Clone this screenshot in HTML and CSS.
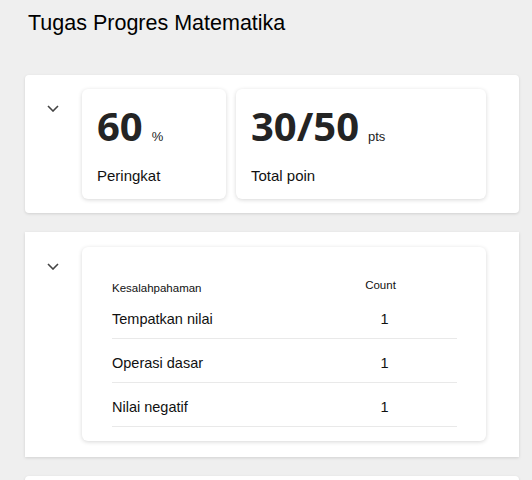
FILE: index.html
```html
<!DOCTYPE html>
<html lang="id">
<head>
<meta charset="utf-8">
<title>Tugas Progres Matematika</title>
<link rel="stylesheet" href="styles.css">
</head>
<body>
<h1 class="title">Tugas Progres Matematika</h1>

<section class="card card-top">
  <div class="toggle">
    <svg class="chev" width="12" height="7" viewBox="0 0 12 7"><polyline points="1,1 6,6 11,1" fill="none" stroke="#444" stroke-width="1.6"/></svg>
  </div>
  <div class="stats">
    <div class="stat stat-grade">
      <div class="big">60<span class="unit">%</span></div>
      <div class="label">Peringkat</div>
    </div>
    <div class="stat stat-points">
      <div class="big">30/50<span class="unit">pts</span></div>
      <div class="label">Total poin</div>
    </div>
  </div>
</section>

<section class="card card-mid">
  <div class="toggle">
    <svg class="chev" width="12" height="7" viewBox="0 0 12 7"><polyline points="1,1 6,6 11,1" fill="none" stroke="#444" stroke-width="1.6"/></svg>
  </div>
  <div class="table-card">
    <div class="thead">
      <div class="th th-name">Kesalahpahaman</div>
      <div class="th th-count">Count</div>
    </div>
    <div class="tr"><div class="td">Tempatkan nilai</div><div class="td td-count">1</div></div>
    <div class="tr"><div class="td">Operasi dasar</div><div class="td td-count">1</div></div>
    <div class="tr"><div class="td">Nilai negatif</div><div class="td td-count">1</div></div>
  </div>
</section>

<section class="card card-bottom"></section>
</body>
</html>
```

FILE: styles.css
```css
html, body {
  margin: 0;
  padding: 0;
}
body {
  background: #efefef;
  font-family: "Liberation Sans", Arial, sans-serif;
  color: #111;
  overflow: hidden;
  height: 480px;
}
.title {
  margin: 11px 0 0 0;
  padding-left: 28px;
  font-size: 21.5px;
  font-weight: normal;
  line-height: 25px;
  color: #000;
}
.card {
  background: #fff;
  margin: 0 13px 0 25px;
  display: flex;
  box-shadow: 0 1px 3px rgba(0, 0, 0, 0.13);
}
.card-top {
  margin-top: 39px;
  border-radius: 4px;
  padding: 14px 33px 14px 0;
}
.card-mid {
  margin-top: 19px;
  padding: 15px 33px 16px 0;
}
.card-bottom {
  margin-top: 19px;
  border-radius: 4px;
  height: 40px;
}
.toggle {
  width: 57px;
  flex: none;
}
.chev {
  display: block;
  margin: 16px 0 0 22px;
}
.stats {
  display: flex;
  gap: 10px;
}
.stat {
  background: #fff;
  border-radius: 6px;
  box-shadow: 0 1px 4px rgba(0, 0, 0, 0.16);
  padding: 17px 15px 14px 15px;
  box-sizing: border-box;
}
.stat-grade { width: 144px; }
.stat-points { width: 250px; }
.big {
  font-family: "Open Sans", "DejaVu Sans", sans-serif;
  font-weight: 700;
  font-size: 40px;
  line-height: 40px;
  height: 40px;
  color: #242424;
  margin-bottom: 21px;
  white-space: nowrap;
}
.unit {
  font-family: "Liberation Sans", Arial, sans-serif;
  font-weight: normal;
  font-size: 13px;
  line-height: 13px;
  margin-left: 9px;
  color: #222;
}
.label {
  font-size: 15px;
  line-height: 18px;
  color: #111;
}
.table-card {
  background: #fff;
  border-radius: 6px;
  box-shadow: 0 1px 4px rgba(0, 0, 0, 0.16);
  width: 404px;
  box-sizing: border-box;
  padding: 32px 29px 14px 30px;
}
.thead, .tr {
  display: grid;
  grid-template-columns: 200px 145px;
}
.thead {
  align-items: end;
  font-size: 11.5px;
  line-height: 13px;
  color: #111;
}
.th-count {
  text-align: center;
  padding-right: 8px;
  padding-bottom: 3px;
}
.tr {
  border-bottom: 1px solid #e9e9e9;
  padding: 16px 0 11px 0;
  font-size: 14.5px;
  line-height: 16px;
  color: #111;
}
.td-count {
  text-align: center;
}
```
